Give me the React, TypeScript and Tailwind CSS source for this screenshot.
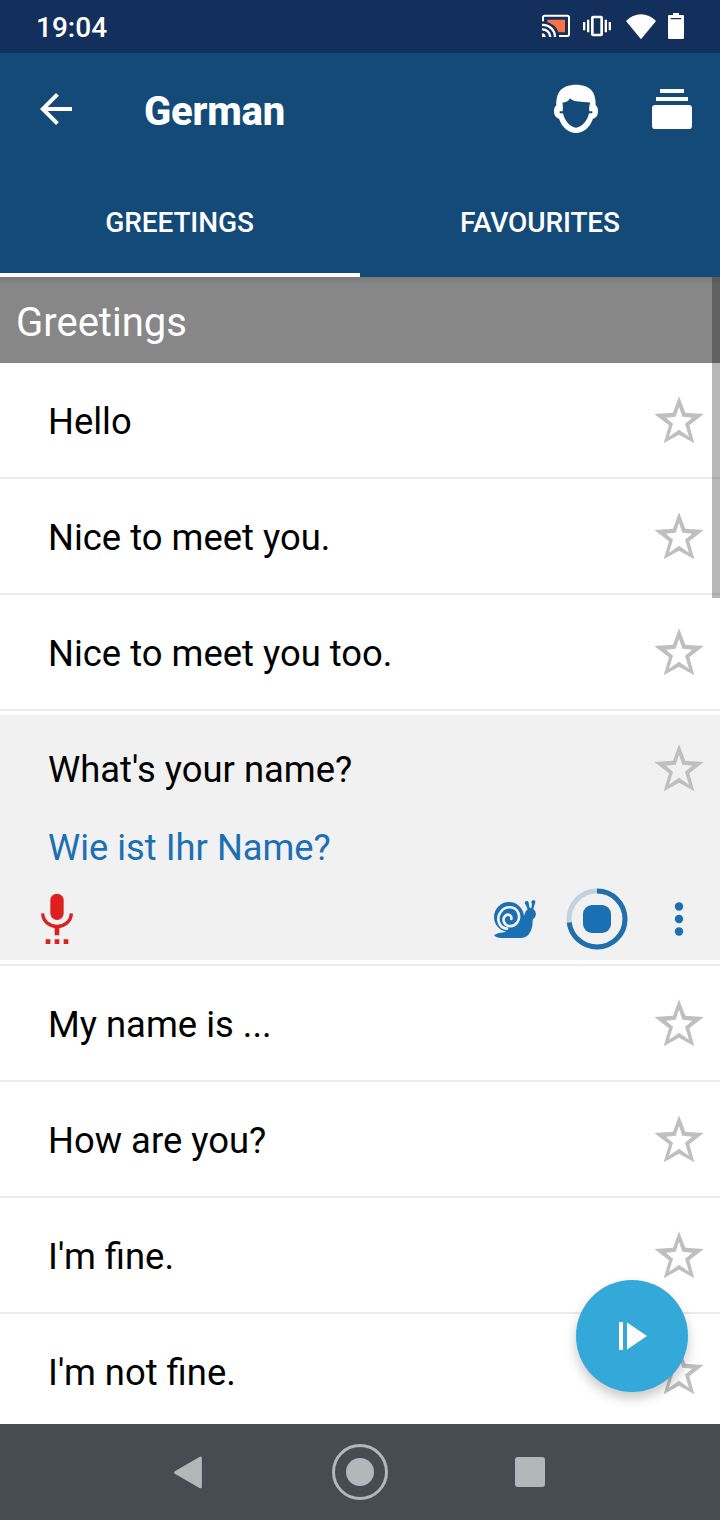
import { MdArrowBack } from "react-icons/md";

const phrasesBefore = ["Hello", "Nice to meet you.", "Nice to meet you too."];
const phrasesAfter = ["My name is ...", "How are you?", "I'm fine.", "I'm not fine."];

function StarIcon() {
    return (
        <svg viewBox="102 48 150 144" className="w-[50px] h-12 shrink-0" fill="#bfbfbf">
            <path
                fillRule="evenodd"
                d="M177 49L196 98L251 102L208 136L223 190L177 164L131 190L147 136L103 102L159 98ZM177 80L167 110L138 113L159 131L147 170L177 149L207 170L195 131L217 113L187 110Z"
            />
        </svg>
    );
}

function StatusBar() {
    return (
        <div className="h-[53px] pb-px pl-9 pr-[35px] flex items-center bg-[#13305d] text-white">
            <span className="flex-1 pt-[3px] text-[28px] leading-8 font-medium">19:04</span>
            <svg viewBox="63 42 90 72" className="w-[30px] h-6 mr-[11px]" fill="none">
                <path d="M82 59H135V97H115C111 82 98 71 82 67Z" fill="#ff7043" />
                <path d="M69 64V52Q69 47 74 47H142Q147 47 147 52V103Q147 108 142 108H117" stroke="#fff" strokeWidth="6" />
                <path d="M66 75A36 36 0 0 1 105 111M66 88A24 24 0 0 1 91 111" stroke="#fff" strokeWidth="7" />
                <path d="M66 100A12 12 0 0 1 77 111H66Z" fill="#fff" />
            </svg>
            <svg viewBox="186 42 90 72" className="w-[30px] h-6 mr-[13px]" fill="#fff">
                <path fillRule="evenodd" d="M219 47H243Q249 47 249 53V103Q249 109 243 109H219Q213 109 213 103V53Q213 47 219 47ZM221 55V101H241V55Z" />
                <path d="M189 66h7v25h-7zM201 59h7v38h-7zM254 59h7v38h-7zM266 66h7v25h-7z" />
            </svg>
            <svg viewBox="315 36 96 81" className="w-8 h-[27px] mr-[10px]" fill="#fff">
                <path d="M363 115L318 60Q338 40 363 40Q388 40 408 60Z" />
            </svg>
            <svg viewBox="441 36 54 84" className="w-[18px] h-7" fill="#fff">
                <path fillRule="evenodd" d="M459 39H477V45H488Q492 45 492 49V113Q492 117 488 117H448Q444 117 444 113V49Q444 45 448 45H459ZM452 54V58H483V54Z" />
            </svg>
        </div>
    );
}

function AppBar() {
    return (
        <div className="h-28 pl-8 pr-7 flex items-center text-white">
            <MdArrowBack size={48} />
            <h1 className="flex-1 ml-16 pt-1.5 text-[40px] leading-[48px] font-extrabold tracking-[-0.2px]">German</h1>
            <svg viewBox="96 246 144 156" className="w-12 h-[52px] mr-[52px] mb-0.5" fill="#fff">
                <path
                    fillRule="evenodd"
                    d="M109 316C108 280 122 254 168 254C214 254 228 280 227 316C234 320 236 336 232 345C229 352 224 354 219 356C210 382 190 399 168 399C146 399 126 382 117 356C112 354 107 352 104 345C100 336 102 320 109 316ZM127 308C137 308 146 304 150 295C156 302 170 306 190 306Q202 306 211 308C207 317 207 326 208 334H217V340H207C203 362 184 383 168 383C152 383 133 362 129 340H119V334H128C129 326 129 316 127 308Z"
                />
            </svg>
            <svg viewBox="396 267 120 120" className="w-10 h-10" fill="#fff">
                <rect x="420" y="267" width="72" height="12" />
                <rect x="408" y="291" width="96" height="12" />
                <rect x="396" y="315" width="120" height="72" rx="10" />
            </svg>
        </div>
    );
}

function Tabs() {
    return (
        <div className="h-28 grid grid-cols-2 text-[28px] leading-8 font-medium text-white text-center tracking-[-0.1px]">
            <div className="flex items-center justify-center border-b-4 border-white pt-2 pr-px">GREETINGS</div>
            <div className="flex items-center justify-center border-b-4 border-transparent pt-2">FAVOURITES</div>
        </div>
    );
}

function PhraseRow({ text }: { text: string }) {
    return (
        <div className="h-[116px] shrink-0 pl-12 pr-4 flex items-center justify-between border-b-2 border-[#ebebeb]">
            <span className="pt-1 text-[36.4px] leading-[44px]">{text}</span>
            <StarIcon />
        </div>
    );
}

function SnailIcon() {
    return (
        <svg viewBox="99 507 132 120" className="w-11 h-10" fill="#1b6fb3">
            <path d="M102 615Q115 608 132 607L178 588Q186 580 188 568L194 552Q197 541 203 538L197 524A6 6 0 1 1 206 520L209 534H214L216 521A6 6 0 1 1 225 520L220 537Q228 542 228 553Q227 564 218 569Q219 595 207 612Q199 624 180 624H125Q108 624 102 615Z" />
            <circle cx="147" cy="561" r="45" />
            <path
                d="M141 596C116 594 108 565 122 546C136 526 166 527 175 549C183 570 167 592 146 588C131 585 126 566 136 557C145 550 156 557 154 567"
                fill="none"
                stroke="#f1f1f1"
                strokeWidth="8"
                strokeLinecap="round"
            />
        </svg>
    );
}

function ActivePhrase() {
    return (
        <div className="shrink-0 py-1 border-b-2 border-[#ebebeb]">
            <div className="h-[245px] bg-[#f1f1f1]">
                <div className="h-[106px] pl-12 pr-4 flex items-center justify-between">
                    <span className="pt-1 text-[36.4px] leading-[44px]">What's your name?</span>
                    <StarIcon />
                </div>
                <p className="h-[52px] pl-12 text-[36.3px] leading-[54px] text-[#1b6fb3]">Wie ist Ihr Name?</p>
                <div className="h-[87px] pt-[5px] pl-10 pr-9 flex items-center">
                    <svg viewBox="120 579 102 156" className="w-[34px] h-[52px] mr-auto" fill="#dd1f1f">
                        <rect x="151" y="581" width="40" height="79" rx="20" />
                        <path d="M128 640C130 692 212 692 214 640" fill="none" stroke="#d62424" strokeWidth="10" />
                        <path d="M164 680h14v26h-14zM137 718h14v14h-14zM164 718h14v14h-14zM191 718h14v14h-14z" />
                    </svg>
                    <SnailIcon />
                    <svg viewBox="0 0 62 62" className="w-[62px] h-[62px] ml-[29px] mr-[46px]" fill="none">
                        <circle cx="31" cy="31" r="28" stroke="#c1d2e2" strokeWidth="5" />
                        <circle
                            cx="31"
                            cy="31"
                            r="28"
                            stroke="#1f6fac"
                            strokeWidth="5"
                            pathLength="100"
                            strokeDasharray="73 27"
                            transform="rotate(-90 31 31)"
                        />
                        <rect x="17" y="17" width="28" height="28" rx="9" fill="#1b6fb3" />
                    </svg>
                    <svg viewBox="0 0 10 36" className="w-2.5 h-9" fill="#1b6fb3">
                        <circle cx="5" cy="5.5" r="4.2" />
                        <circle cx="5" cy="18" r="4.2" />
                        <circle cx="5" cy="30.5" r="4.2" />
                    </svg>
                </div>
            </div>
        </div>
    );
}

function NavBar() {
    return (
        <div className="h-24 pl-[173px] flex items-center bg-[#454d52]">
            <svg viewBox="99 118 90 106" className="w-[30px] h-[35px]" fill="#b2b7b9" stroke="#b2b7b9" strokeWidth="8" strokeLinejoin="round">
                <path d="M106 171L182 127V215Z" />
            </svg>
            <div className="w-14 h-14 ml-[129px] rounded-full border-3 border-[#b2b7b9] flex items-center justify-center">
                <div className="w-7 h-7 rounded-full bg-[#b2b7b9]" />
            </div>
            <div className="w-[30px] h-[30px] ml-[127px] rounded-[3px] bg-[#b2b7b9]" />
        </div>
    );
}

export default function App() {
    return (
        <div className="w-[720px] h-[1520px] flex flex-col overflow-hidden bg-white text-black font-[Roboto,sans-serif]">
            <StatusBar />
            <header className="bg-[#144a78]">
                <AppBar />
                <Tabs />
            </header>

            <main className="relative flex-1 min-h-0 flex flex-col overflow-hidden">
                <h2 className="h-[86px] shrink-0 pl-4 pt-1.5 flex items-center bg-[#878787] bg-linear-to-b from-[#7a7a7a] to-[#878787] to-10% text-[40px] leading-[48px] text-white">
                    Greetings
                </h2>
                {phrasesBefore.map((text) => (
                    <PhraseRow key={text} text={text} />
                ))}
                <ActivePhrase />
                {phrasesAfter.map((text) => (
                    <PhraseRow key={text} text={text} />
                ))}

                {/* scroll thumb */}
                <div className="absolute top-0 right-0 w-2 h-[321px] bg-black/28" />

                <button className="absolute right-8 bottom-8 w-28 h-28 rounded-full bg-[#35a8da] shadow-[0_6px_12px_rgba(0,0,0,0.22)] flex items-center justify-center">
                    <svg viewBox="0 0 28 28" className="w-7 h-7 ml-0.5" fill="#fff">
                        <path d="M0 0h4v28h-4zM8 0.5L28 14L8 27.5Z" />
                    </svg>
                </button>
            </main>

            <NavBar />
        </div>
    );
}
